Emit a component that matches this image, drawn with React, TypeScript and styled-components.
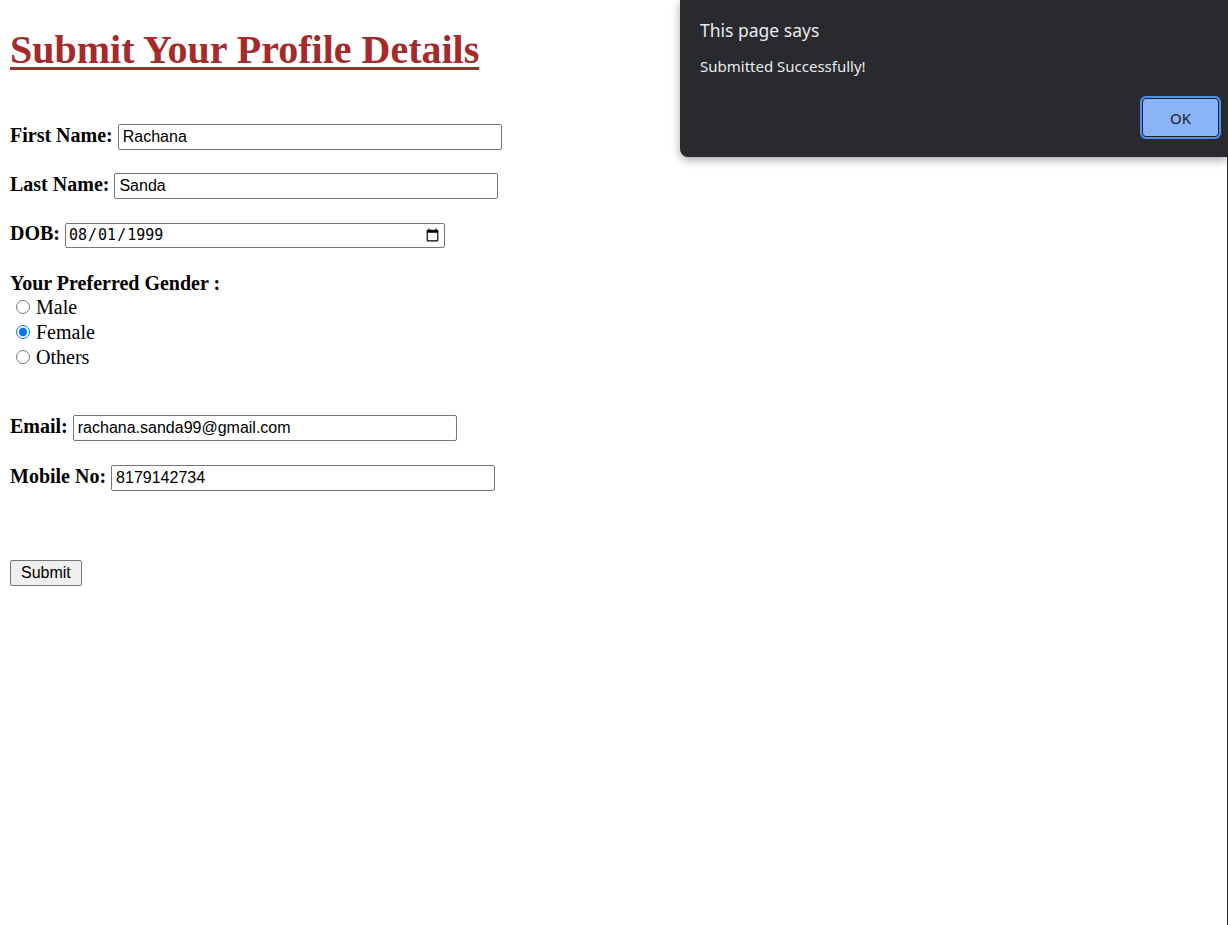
import styled, { createGlobalStyle } from 'styled-components';

const GlobalStyle = createGlobalStyle`
  html, body {
    margin: 0;
    padding: 0;
    background: #ffffff;
    overflow: hidden;
  }
  body {
    font-family: "Liberation Serif", "Times New Roman", serif;
    font-size: 20px;
    color: #000000;
  }
`;

const Page = styled.div`
  position: relative;
  box-sizing: border-box;
  width: 1228px;
  height: 925px;
  padding: 27px 10px 0;
  border-right: 1px solid #202124;
`;

const Heading = styled.h1`
  margin: 0;
  font-size: 40px;
  line-height: 46px;
  font-weight: bold;
  color: #a52a2a;
  text-decoration: underline;
  text-decoration-thickness: 3px;
  text-underline-offset: 4px;
`;

const Form = styled.form`
  display: flex;
  flex-direction: column;
  padding-top: 51px;
`;

const Row = styled.div<{ gap?: number }>`
  display: flex;
  align-items: baseline;
  height: 26px;
  margin-bottom: ${p => (p.gap ?? 23)}px;
`;

const Label = styled.label`
  font-weight: bold;
  line-height: 23px;
  margin-right: 5px;
`;

const TextInput = styled.input<{ w?: number }>`
  box-sizing: border-box;
  width: ${p => p.w ?? 384}px;
  height: 26px;
  padding: 1px 4px;
  border: 1px solid #767676;
  border-radius: 2px;
  font-family: "Liberation Sans", Arial, sans-serif;
  font-size: 16px;
  color: #000;
  background: #fff;
  outline: none;
`;

const DateInput = styled(TextInput)`
  height: 25px;
  font-family: "DejaVu Sans Mono", "Liberation Mono", monospace;
  font-size: 15px;
  padding: 1px 2px;
`;

const GenderBlock = styled.div`
  display: flex;
  flex-direction: column;
  margin-bottom: 45px;
`;

const GenderTitle = styled.div`
  font-weight: bold;
  line-height: 24px;
`;

const Option = styled.label`
  display: flex;
  align-items: baseline;
  line-height: 25px;
`;

const Radio = styled.input`
  width: 14px;
  height: 14px;
  margin: 0 6px 0 6px;
  accent-color: #0075ff;
`;

const SubmitButton = styled.button`
  align-self: flex-start;
  box-sizing: border-box;
  height: 26px;
  margin-top: 69px;
  padding: 1px 10px;
  border: 1px solid #767676;
  border-radius: 2px;
  background: #efefef;
  font-family: "Liberation Sans", Arial, sans-serif;
  font-size: 16px;
  color: #000;
`;

const Dialog = styled.div`
  position: absolute;
  top: 0;
  left: 680px;
  width: 548px;
  box-sizing: border-box;
  padding: 18px 9px 20px 20px;
  background: #292a2d;
  border-bottom-left-radius: 8px;
  box-shadow: 0 3px 8px rgba(0, 0, 0, 0.35);
  font-family: "Noto Sans", "Open Sans", sans-serif;
  color: #e8eaed;
`;

const DialogTitle = styled.div`
  font-size: 17.5px;
  line-height: 24px;
`;

const DialogMessage = styled.div`
  margin-top: 14px;
  font-size: 15px;
  line-height: 20px;
`;

const DialogActions = styled.div`
  display: flex;
  justify-content: flex-end;
  margin-top: 22px;
`;

const OkButton = styled.button`
  box-sizing: border-box;
  width: 77px;
  height: 39px;
  border: 1px solid #202124;
  border-radius: 4px;
  box-shadow: 0 0 0 2px #4d8ff5;
  background: #8ab4f8;
  color: #202124;
  font-family: "Noto Sans", "Open Sans", sans-serif;
  font-size: 15px;
`;

const App = () => {
  return (
    <>
      <GlobalStyle />
      <Page>
        <Heading>Submit Your Profile Details</Heading>
        <Form onSubmit={e => e.preventDefault()}>
          <Row>
            <Label>First Name:</Label>
            <TextInput type="text" defaultValue="Rachana" />
          </Row>
          <Row>
            <Label>Last Name:</Label>
            <TextInput type="text" defaultValue="Sanda" />
          </Row>
          <Row>
            <Label>DOB:</Label>
            <DateInput type="date" w={380} defaultValue="1999-08-01" />
          </Row>
          <GenderBlock>
            <GenderTitle>Your Preferred Gender :</GenderTitle>
            <Option>
              <Radio type="radio" name="gender" value="male" />
              Male
            </Option>
            <Option>
              <Radio type="radio" name="gender" value="female" defaultChecked />
              Female
            </Option>
            <Option>
              <Radio type="radio" name="gender" value="others" />
              Others
            </Option>
          </GenderBlock>
          <Row gap={24}>
            <Label>Email:</Label>
            <TextInput type="email" defaultValue="rachana.sanda99@gmail.com" />
          </Row>
          <Row gap={0}>
            <Label>Mobile No:</Label>
            <TextInput type="tel" defaultValue="8179142734" />
          </Row>
          <SubmitButton type="submit">Submit</SubmitButton>
        </Form>
        <Dialog>
          <DialogTitle>This page says</DialogTitle>
          <DialogMessage>Submitted Successfully!</DialogMessage>
          <DialogActions>
            <OkButton type="button">OK</OkButton>
          </DialogActions>
        </Dialog>
      </Page>
    </>
  );
};

export default App;
